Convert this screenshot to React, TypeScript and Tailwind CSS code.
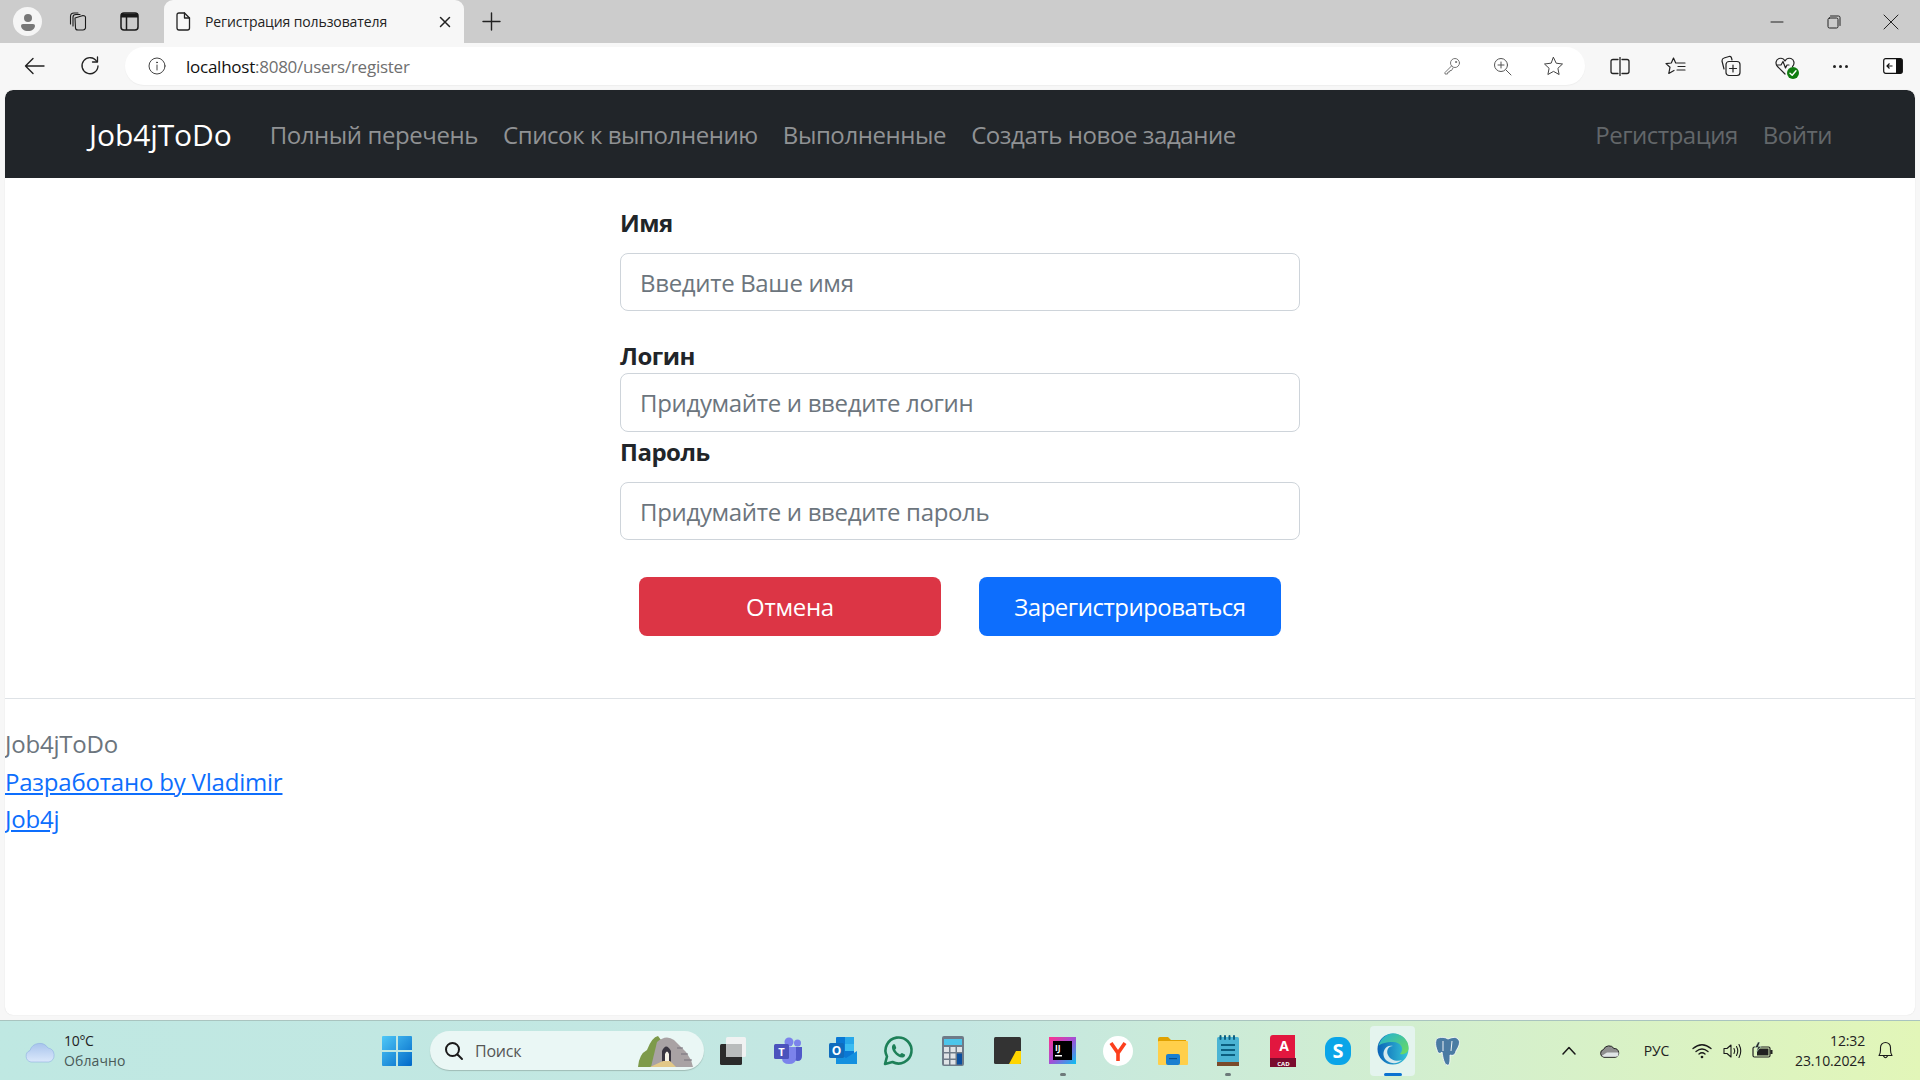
import React from "react";

const F = { fontFamily: '"Open Sans", "Noto Sans", sans-serif' };

function Ic({ w = 20, h = 20, vb = "0 0 20 20", sw = 1.2, color = "#1a1a1a", children, className = "" }: any) {
  return (
    <svg width={w} height={h} viewBox={vb} fill="none" stroke={color} strokeWidth={sw} strokeLinecap="round" strokeLinejoin="round" className={className}>
      {children}
    </svg>
  );
}

function TabStrip() {
  return (
    <div className="h-[43px] bg-[#cccccc] flex items-end shrink-0">
      <div className="w-[164px] h-full flex items-center pl-[13px] shrink-0">
        <div className="w-[29px] h-[29px] rounded-full bg-[#f5f5f5] flex items-center justify-center shrink-0">
          <svg width="18" height="20" viewBox="0 0 18 20"><circle cx="9" cy="6" r="4" fill="#777" /><path d="M2 13.5 Q2 12 4 12 H14 Q16 12 16 13.5 C16 17 13 19 9 19 C5 19 2 17 2 13.5Z" fill="#777" /></svg>
        </div>
        <div className="ml-[25px] shrink-0 flex">
          <Ic w={22} h={22} vb="0 0 22 22" sw={1.1}>
            <path d="M8 7 L16 4.5 Q18 4.5 18.5 6 V17 Q18 19 16 19 L11 19 Q8.5 19 8.5 17Z" />
            <path d="M6 15 V6 Q6 3.5 9 3.5 H13" />
            <path d="M3.5 13 V5.5 Q3.5 2 7 2 H11" />
          </Ic>
        </div>
        <div className="ml-[31px] shrink-0 flex">
          <svg width="19" height="19" viewBox="0 0 19 19" fill="none" stroke="#1a1a1a" strokeWidth="1.5"><rect x="1" y="1" width="17" height="17" rx="3" /><path d="M1 3.5H18" strokeWidth="4" /><path d="M6.5 5V18" /></svg>
        </div>
      </div>
      <div className="w-[300px] h-full bg-[#f7f7f7] rounded-t-[9px] flex items-center pl-[11px] shrink-0">
        <Ic w={16} h={19} vb="0 0 16 19" sw={1.3} color="#222"><path d="M2 3 Q2 1 4 1 H9.5 L14.500 6 V16 Q14.500 18 12.500 18 H4 Q2 18 2 16Z" /><path d="M9.500 1V6H14.500" /></Ic>
        <span className="ml-[14px] -mt-[1px] text-[14px] text-[#222] whitespace-nowrap tracking-[-0.1px]" style={F}>Регистрация пользователя</span>
        <div className="ml-auto mr-[13px] flex">
          <Ic w={12} h={12} vb="0 0 12 12" sw={1.5} color="#222"><path d="M1.500 1.500 10.500 10.500M10.500 1.500 1.500 10.500" /></Ic>
        </div>
      </div>
      <div className="ml-[18px] h-full flex items-center">
        <Ic w={19} h={19} vb="0 0 19 19" sw={1.4} color="#222"><path d="M9.500 1V18M1 9.500H18" /></Ic>
      </div>
      <div className="ml-auto h-full flex items-center">
        <Ic w={14} h={14} vb="0 0 14 14" sw={1} color="#222"><path d="M1 7H13" /></Ic>
        <div className="ml-[43px] flex">
          <Ic w={14} h={14} vb="0 0 14 14" sw={1} color="#222"><rect x="1" y="3" width="10" height="10" rx="1.500" /><path d="M3.500 1H11.500Q13 1 13 2.500V10.500" /></Ic>
        </div>
        <div className="ml-[42px] mr-[21px] flex">
          <Ic w={16} h={16} vb="0 0 16 16" sw={1} color="#222"><path d="M1 1 15 15M15 1 1 15" /></Ic>
        </div>
      </div>
    </div>
  );
}

function Toolbar() {
  return (
    <div className="h-[47px] bg-[#f7f7f7] flex items-center shrink-0 pb-[1px]">
      <div className="ml-[24px] flex shrink-0">
        <Ic w={21} h={18} vb="0 0 21 18" sw={1.4} color="#222"><path d="M20 9H1.500M9 1.500 1.500 9 9 16.500" /></Ic>
      </div>
      <div className="ml-[35px] flex shrink-0">
        <Ic w={20} h={20} vb="0 0 20 20" sw={1.3} color="#222"><path d="M16.800 5.500A8 8 0 1 0 18 10" /><path d="M17.500 1V6H12.500" /></Ic>
      </div>
      <div className="ml-[25px] w-[1460px] h-[38px] bg-white rounded-full flex items-center shrink-0 shadow-[0_1px_1px_#eee]">
        <div className="ml-[23px] flex">
          <Ic w={18} h={18} vb="0 0 18 18" sw={1} color="#444"><circle cx="9" cy="9" r="8" /><path d="M9 8V13" /><circle cx="9" cy="5.400" r=".5" fill="#444" /></Ic>
        </div>
        <span className="ml-[20px] mt-[1px] text-[17px] whitespace-nowrap tracking-[-0.25px]" style={F}>
          <span className="text-[#111]">localhost</span><span className="text-[#6f6f6f]">:8080/users/register</span>
        </span>
        <div className="ml-auto flex items-center">
          <Ic w={18} h={18} vb="0 0 18 18" sw={1} color="#777"><circle cx="12" cy="6" r="4.500" /><path d="M8.500 9 2 15.500V17H4.500L5 15H6.500L7 13.500H8.500L10 11" /><circle cx="13" cy="5" r=".6" fill="#777" /></Ic>
          <div className="ml-[32px] flex">
            <Ic w={19} h={19} vb="0 0 19 19" sw={1} color="#555"><circle cx="8" cy="8" r="6.500" /><path d="M13 13 18 18M8 5V11M5 8H11" /></Ic>
          </div>
          <div className="ml-[31px] mr-[21px] flex">
            <Ic w={21} h={20} vb="0 0 21 20" sw={1} color="#444"><path d="M10.500 1.500 13.200 7.200 19.500 8 14.900 12.300 16.100 18.500 10.500 15.400 4.900 18.500 6.100 12.300 1.500 8 7.800 7.200Z" /></Ic>
          </div>
        </div>
      </div>
      <div className="ml-[25px] flex shrink-0">
        <Ic w={20} h={19} vb="0 0 20 19" sw={1.3} color="#222"><path d="M8 2.500H3Q1 2.500 1 4.500V14.500Q1 16.500 3 16.500H8M12 2.500H17Q19 2.500 19 4.500V14.500Q19 16.500 17 16.500H12M10 0.500V18.500" /></Ic>
      </div>
      <div className="ml-[35px] flex shrink-0">
        <Ic w={21} h={20} vb="0 0 21 20" sw={1.2} color="#222"><path d="M8.500 2 10.700 7H20M13 10.500H20M12 14H20M8.500 2 6.300 7 1 7.600 5 11.200 3.800 17.500 9 14.500" /></Ic>
      </div>
      <div className="ml-[34px] flex shrink-0">
        <Ic w={21} h={22} vb="0 0 21 22" sw={1.2} color="#222"><path d="M4 14 2 6Q2 3.500 4 3L9 1.500Q11 1 11.500 3L12 5" /><rect x="6" y="6.500" width="14" height="14" rx="3" /><path d="M13 10V17M9.500 13.500H16.500" /></Ic>
      </div>
      <div className="ml-[34px] flex shrink-0 relative">
        <Ic w={21} h={20} vb="0 0 21 20" sw={1.2} color="#222"><path d="M10 18 2.500 10.500C0 8 0.800 3.500 4 2.500 6.500 1.800 8.800 2.800 10 5 11.200 2.800 13.500 1.800 16 2.500 19.200 3.500 20 8 17.500 10.500" /><path d="M2 9H6L8 5.500 10.500 12 12 9H14" /></Ic>
        <div className="absolute -right-[3px] -bottom-[3px] w-[12px] h-[12px] rounded-full bg-[#107c10] flex items-center justify-center">
          <Ic w={8} h={8} vb="0 0 8 8" sw={1.4} color="#fff"><path d="M1 4.200 3.200 6.200 7 1.800" /></Ic>
        </div>
      </div>
      <div className="ml-[37px] flex gap-[3px] shrink-0">
        <div className="w-[3px] h-[3px] rounded-full bg-[#222]" />
        <div className="w-[3px] h-[3px] rounded-full bg-[#222]" />
        <div className="w-[3px] h-[3px] rounded-full bg-[#222]" />
      </div>
      <div className="ml-[35px] flex shrink-0">
        <svg width="20" height="16" viewBox="0 0 20 16"><rect x=".7" y=".7" width="18.600" height="14.600" rx="2" fill="#fff" stroke="#111" strokeWidth="1.200" /><path d="M13 1H18Q19.300 1 19.300 2.500V13.500Q19.300 15 18 15H13Z" fill="#111" /><path d="M9.500 8H4M6.500 5.500 4 8 6.500 10.500" stroke="#111" strokeWidth="1.200" fill="none" /></svg>
      </div>
    </div>
  );
}

function NavBar() {
  const links = ["Полный перечень", "Список к выполнению", "Выполненные", "Создать новое задание"];
  return (
    <nav className="h-[88px] bg-[#212529] rounded-t-[8px] flex items-center pl-[84px] pr-[83px] pt-[1px] shrink-0" style={F}>
      <span className="text-[30px] text-white tracking-[-0.1px] mr-[38px] whitespace-nowrap">Job4jToDo</span>
      <div className="flex gap-[25px]">
        {links.map((l) => (
          <span key={l} className="text-[24px] text-[#909294] tracking-[-0.42px] whitespace-nowrap">{l}</span>
        ))}
      </div>
      <div className="ml-auto flex gap-[25px]">
        <span className="text-[24px] text-[#63676a] tracking-[-0.5px]">Регистрация</span>
        <span className="text-[24px] text-[#63676a] tracking-[-0.5px]">Войти</span>
      </div>
    </nav>
  );
}

function Field({ label, ph, labelClass, inputClass }: { label: string; ph: string; labelClass: string; inputClass: string }) {
  return (
    <div>
      <label className={"block text-[24px] leading-[36px] font-bold text-[#212529] tracking-[-0.5px] " + labelClass}>{label}</label>
      <input
        readOnly
        placeholder={ph}
        style={F}
        className={"block w-full bg-white border border-[#ced4da] rounded-[8px] pl-[19px] pr-[20px] text-[24px] tracking-[-0.33px] placeholder:text-[#6c757d] outline-none " + inputClass}
      />
    </div>
  );
}

function Form() {
  return (
    <div className="w-[680px] mx-auto pt-[27px]" style={F}>
      <Field label="Имя" ph="Введите Ваше имя" labelClass="mb-[12px]" inputClass="h-[58px] mb-[26px]" />
      <Field label="Логин" ph="Придумайте и введите логин" labelClass="pt-[1px] -mb-[1px]" inputClass="h-[59px]" />
      <Field label="Пароль" ph="Придумайте и введите пароль" labelClass="pt-[2px] mb-[12px]" inputClass="h-[58px]" />
      <div className="flex justify-center gap-[38px] mt-[37px]">
        <button className="w-[302px] h-[59px] pt-[1px] bg-[#dc3545] rounded-[8px] text-white text-[24px] tracking-[-0.3px]">Отмена</button>
        <button className="w-[302px] h-[59px] pt-[1px] bg-[#0d6efd] rounded-[8px] text-white text-[24px] tracking-[-0.5px]">Зарегистрироваться</button>
      </div>
    </div>
  );
}

function Footer() {
  return (
    <footer className="mt-[62px] border-t border-[#dee2e6] pt-[26px] text-[24px] leading-[37.500px] tracking-[-0.2px]" style={F}>
      <div className="text-[#6c757d]">Job4jToDo</div>
      <div><a className="text-[#0d6efd] underline">Разработано by Vladimir</a></div>
      <div><a className="text-[#0d6efd] underline">Job4j</a></div>
    </footer>
  );
}

function TaskIcon({ children, dot, active }: any) {
  return (
    <div className={"w-[45px] h-[50px] mx-[5px] rounded-[4px] relative flex items-center justify-center shrink-0 " + (active ? "bg-[#e4f4ee]" : "")}>
      {children}
      {dot && <div className="absolute bottom-[0px] left-1/2 -translate-x-1/2 w-[6px] h-[3px] rounded-full bg-[#6d7a7a]" />}
      {active && <div className="absolute bottom-[0px] left-1/2 -translate-x-1/2 w-[18px] h-[3px] rounded-full bg-[#0a72d1]" />}
    </div>
  );
}

function TaskBar() {
  return (
    <div className="h-[60px] shrink-0 border-t border-[#a9c4bf] bg-gradient-to-r from-[#bfe8e2] via-[#c4e7e2] to-[#e2f6b8] flex items-center relative" style={F}>
      <div className="ml-[24px] flex shrink-0">
        <svg width="32" height="24" viewBox="0 0 32 24"><defs><linearGradient id="c" x1="0" y1="0" x2="0" y2="1"><stop offset="0" stopColor="#a8c4ec" /><stop offset="1" stopColor="#dbe8fb" /></linearGradient></defs><path d="M7 23A6 6 0 0 1 6 11.500 10 10 0 0 1 24 9 7.200 7.200 0 0 1 25 23Z" fill="url(#c)" stroke="#8fb0e2" strokeWidth=".6" /></svg>
      </div>
      <div className="ml-[8px] w-[100px] shrink-0 text-[14px] leading-[20px] text-[#222] tracking-[-0.3px]">
        <div>10°C</div>
        <div className="text-[#4a5a58] tracking-[0.1px]">Облачно</div>
      </div>
      <div className="ml-[218px] flex shrink-0">
        <svg width="30" height="30" viewBox="0 0 30 30"><defs><linearGradient id="w" x1="0" y1="0" x2="1" y2="1"><stop offset="0" stopColor="#4fc8f7" /><stop offset="1" stopColor="#0068c8" /></linearGradient></defs><path d="M0 1Q0 0 1 0H14V14H0ZM16 0H29Q30 0 30 1V14H16ZM0 16H14V30H1Q0 30 0 29ZM16 16H30V29Q30 30 29 30H16Z" fill="url(#w)" /></svg>
      </div>
      <div className="ml-[18px] w-[274px] h-[39px] rounded-full bg-[#eaf7f5] shadow-[0_1px_1px_#9fbcb6] flex items-center shrink-0 relative">
        <div className="ml-[14px] flex">
          <Ic w={20} h={20} vb="0 0 20 20" sw={2} color="#1a1a1a"><circle cx="8.500" cy="8.500" r="6.500" /><path d="M13.500 13.500 18 18" /></Ic>
        </div>
        <span className="ml-[11px] text-[16px] text-[#555] tracking-[-0.2px]">Поиск</span>
        <div className="absolute right-[8px] bottom-[2px] flex">
          <svg width="60" height="34" viewBox="0 0 60 34">
            <path d="M2 33Q3 20 11 16 16 3 22 2L25 6 18 33Z" fill="#7d9a4a" />
            <path d="M15 33 21 8Q30 0 38 6L44 12 50 18 55 26 57 33Z" fill="#a9a2a4" />
            <path d="M26 33V17Q30 8 35 17V33Z" fill="#3a3540" />
            <path d="M29 33V20Q31 15 33 20V33Z" fill="#f7f3e8" />
            <path d="M14 33 27 27H34L40 33Z" fill="#e2c888" />
            <path d="M41 14H47M45 20H52M48 26H56" stroke="#77707a" strokeWidth="1.200" />
          </svg>
        </div>
      </div>
      <div className="ml-[1px] flex items-center shrink-0">
        <TaskIcon><svg width="28" height="30" viewBox="0 0 28 30"><rect x="1" y="8" width="22" height="21" rx="1.500" fill="#2b2b2b" /><rect x="7" y="1" width="20" height="20" rx="1.500" fill="#f0f2f2" /><rect x="7" y="8" width="16" height="13" fill="#b9bcbc" /></svg></TaskIcon>
        <TaskIcon><svg width="30" height="28" viewBox="0 0 30 28"><circle cx="24.500" cy="6" r="3.500" fill="#7b83eb" /><circle cx="16" cy="5" r="4.500" fill="#7b83eb" /><path d="M20 10H29V19Q29 24 24.500 24 22 24 20 22Z" fill="#5059c9" /><path d="M9 10H23V21Q23 27 16 27 9 27 9 21Z" fill="#7b83eb" /><rect x="1" y="7" width="15" height="15" rx="1.500" fill="#4b53bc" /><text x="8.500" y="18.500" fontSize="11" fontWeight="700" fill="#fff" textAnchor="middle" fontFamily="Open Sans">T</text></svg></TaskIcon>
        <TaskIcon><svg width="30" height="30" viewBox="0 0 30 30"><rect x="8" y="1" width="18" height="22" rx="1" fill="#0a78d4" /><rect x="17" y="1" width="9" height="7" fill="#28a8ea" /><rect x="17" y="8" width="9" height="7" fill="#50d9ff" opacity=".7" /><path d="M8 16 18 22 29 15V28H8Z" fill="#1490df" /><rect x="1" y="7" width="15" height="15" rx="1.500" fill="#0f6cbd" /><text x="8.500" y="18.800" fontSize="12" fontWeight="700" fill="#fff" textAnchor="middle" fontFamily="Open Sans">O</text></svg></TaskIcon>
        <TaskIcon><svg width="32" height="32" viewBox="0 0 32 32"><path d="M3 29 5 21.500A13 13 0 1 1 10.500 27Z" fill="none" stroke="#1d8058" strokeWidth="2.600" strokeLinejoin="round" /><path d="M11 9.500C9.500 11 9.500 14 12 17.500 15 21.500 18.500 23 21 22.500 22.500 22 23.500 20.500 23 19.500L20 18C19 18 18.800 19.200 18 19.400 16 18.800 14 16.500 13.200 14.800 13.400 14 14.500 13.600 14.200 12.600L13 9.500C12.500 9 11.500 9 11 9.500Z" fill="#1d8058" /></svg></TaskIcon>
        <TaskIcon><svg width="24" height="30" viewBox="0 0 24 30"><rect x="1" y="0" width="22" height="30" rx="2" fill="#6e7b88" /><rect x="3" y="3" width="18" height="6" fill="#4cc5ea" /><g fill="#dfe3e6"><rect x="3" y="11" width="5" height="5" /><rect x="9.500" y="11" width="5" height="5" /><rect x="16" y="11" width="5" height="5" /><rect x="3" y="17.500" width="5" height="5" /><rect x="9.500" y="17.500" width="5" height="5" /><rect x="3" y="24" width="5" height="4.500" /><rect x="9.500" y="24" width="5" height="4.500" /></g><rect x="16" y="17.500" width="5" height="11" fill="#0b4f9e" /></svg></TaskIcon>
        <TaskIcon><svg width="27" height="27" viewBox="0 0 27 27"><rect width="27" height="27" rx="1.500" fill="#333" /><path d="M15 27 22 14H27V25.500Q27 27 25.500 27Z" fill="#ffd500" /></svg></TaskIcon>
        <TaskIcon dot><svg width="27" height="27" viewBox="0 0 27 27"><defs><linearGradient id="ij" x1="0" y1="0" x2="1" y2="1"><stop offset="0" stopColor="#ff318c" /><stop offset=".5" stopColor="#a34fd6" /><stop offset="1" stopColor="#07c3f2" /></linearGradient></defs><rect width="27" height="27" fill="url(#ij)" /><rect x="4" y="4" width="19" height="19" fill="#000" /><text x="6" y="14" fontSize="8.500" fontWeight="700" fill="#fff" fontFamily="Open Sans">IJ</text><rect x="6" y="18" width="7" height="1.500" fill="#fff" /></svg></TaskIcon>
        <TaskIcon><svg width="30" height="30" viewBox="0 0 30 30"><circle cx="15" cy="15" r="15" fill="#fff" /><path d="M8 7 15 17 22 7M15 17V25" stroke="#fc3f1d" strokeWidth="3.600" fill="none" /></svg></TaskIcon>
        <TaskIcon><svg width="30" height="28" viewBox="0 0 30 28"><path d="M0 2Q0 0 2 0H10L13 3H28V8H0Z" fill="#e0a100" /><rect y="4" width="30" height="24" rx="1" fill="#ffcf4a" /><rect x="8" y="17" width="14" height="11" rx="2" fill="#1a7fd0" /><rect x="11" y="21" width="8" height="1.200" fill="#0b4f8a" /></svg></TaskIcon>
        <TaskIcon dot><svg width="22" height="32" viewBox="0 0 22 32"><rect x="0" y="2" width="22" height="27" rx="1.500" fill="#4bb4d4" /><rect x="0" y="27" width="22" height="4" fill="#7a4a2a" /><g fill="#0c5f80"><rect x="2.500" y="0" width="2" height="5" rx="1" /><rect x="7" y="0" width="2" height="5" rx="1" /><rect x="11.500" y="0" width="2" height="5" rx="1" /><rect x="16" y="0" width="2" height="5" rx="1" /><rect x="4" y="9" width="14" height="2" /><rect x="4" y="14" width="14" height="2" /><rect x="4" y="19" width="14" height="2" /></g></svg></TaskIcon>
        <TaskIcon><svg width="26" height="32" viewBox="0 0 26 32"><path d="M3 0H25V32H3Q0 32 0 29V3Q0 0 3 0Z" fill="#e2173f" /><rect y="23" width="26" height="9" fill="#7a0c2e" /><text x="14" y="16" fontSize="14" fontWeight="700" fill="#fff" textAnchor="middle" fontFamily="Open Sans">A</text><text x="13.500" y="30.500" fontSize="6" fontWeight="700" fill="#fff" textAnchor="middle" fontFamily="Open Sans">CAD</text></svg></TaskIcon>
        <TaskIcon><svg width="28" height="30" viewBox="0 0 28 30"><rect x="1" y="1" width="26" height="28" rx="11" fill="#0aa5e8" /><text x="14" y="22" fontSize="20" fontWeight="700" fill="#fff" textAnchor="middle" fontFamily="Open Sans">S</text></svg></TaskIcon>
        <TaskIcon active><svg width="32" height="32" viewBox="0 0 32 32" className="-mt-[3px]"><defs><linearGradient id="e" x1="0" y1="0" x2="1" y2="0"><stop offset="0" stopColor="#0b63b8" /><stop offset="1" stopColor="#36c7d8" /></linearGradient><linearGradient id="e2" x1="0" y1="0" x2="1" y2="1"><stop offset="0" stopColor="#1fb0d8" /><stop offset="1" stopColor="#6fdc5a" /></linearGradient></defs><circle cx="16" cy="16" r="15.500" fill="url(#e)" /><path d="M1.500 13C4 4 11 .5 16 .5 25 .5 31.500 7 31.500 15 31.500 20 27 22 23 21 28 16 24 9 16 9 9 9 3 11 1.500 13Z" fill="url(#e2)" /><path d="M16 13C11 13 9 18 11 22 13 27 20 29 25 27 20 32 10 31 7 24 5 18 9 11 16 13Z" fill="#d5e9ee" /></svg></TaskIcon>
        <TaskIcon><svg width="28" height="30" viewBox="0 0 28 30"><path d="M4 2C1 3 1 9 3 14 4 18 6 18 8 16 9 22 10 28 13 29 16 30 16 26 16 19 19 20 21 19 22 15 25 10 27 6 24 3 21 0 17 2 14 3 11 1 7 1 4 2Z" fill="#4a7ba3" stroke="#fff" strokeWidth=".8" /><path d="M9 5V15M18 5 17 15" stroke="#fff" strokeWidth=".9" fill="none" /></svg></TaskIcon>
      </div>
      <div className="ml-auto flex items-center shrink-0">
        <Ic w={14} h={9} vb="0 0 14 9" sw={1.500} color="#1a1a1a"><path d="M1 8 7 1.500 13 8" /></Ic>
        <div className="ml-[23px] flex">
          <svg width="21" height="14" viewBox="0 0 21 14"><path d="M5 13.300A4 4 0 0 1 4.500 5.500 6 6 0 0 1 15 4.500 4.500 4.500 0 0 1 16.500 13.300Z" fill="#8f8f8f" stroke="#222" strokeWidth="1" /><path d="M2.500 12 8 8.500H19.500V12L17 12.800H5Z" fill="#e9eef0" opacity=".9" /></svg>
        </div>
        <span className="ml-[24px] text-[14px] text-[#222] tracking-[-0.2px]">РУС</span>
        <div className="ml-[23px] flex">
          <Ic w={20} h={16} vb="0 0 20 16" sw={1.300} color="#1a1a1a"><path d="M1 5.500Q10 -2 19 5.500M4 8.500Q10 3.500 16 8.500M7 11Q10 8.500 13 11" /><circle cx="10" cy="14" r=".7" fill="#1a1a1a" /></Ic>
        </div>
        <div className="ml-[11px] flex">
          <Ic w={21} h={16} vb="0 0 21 16" sw={1.100} color="#1a1a1a"><path d="M1 5.500H4L8 2V14L4 10.500H1Z" /><path d="M11 5.500Q12.500 8 11 10.500M13.500 3.500Q16 8 13.500 12.500M16 1.500Q19.500 8 16 14.500" /></Ic>
        </div>
        <div className="ml-[8px] flex">
          <svg width="21" height="17" viewBox="0 0 21 17"><rect x="1" y="5" width="17" height="10" rx="1.500" fill="none" stroke="#222" strokeWidth="1.200" /><rect x="5" y="6.500" width="11.500" height="7" fill="#222" /><rect x="18.300" y="8" width="2.200" height="4" fill="#222" /><path d="M6 0 3 5.500H6L4.500 10 9 4.500H6.300L8 0Z" fill="#222" stroke="#c8eed2" strokeWidth=".6" /></svg>
        </div>
        <div className="ml-[22px] text-right text-[14px] leading-[20px] text-[#222] tracking-[-0.15px]">
          <div>12:32</div>
          <div>23.10.2024</div>
        </div>
        <div className="ml-[12px] mr-[26px] flex">
          <Ic w={17} h={19} vb="0 0 17 19" sw={1.100} color="#1a1a1a"><path d="M2 14.500Q3.500 12.500 3.500 9V6.500A5 5 0 0 1 13.500 6.500V9Q13.500 12.500 15 14.500Z" /><path d="M6.500 15Q8.500 18.500 10.500 15" /></Ic>
        </div>
      </div>
    </div>
  );
}

export default function App() {
  return (
    <div className="w-[1920px] h-[1080px] overflow-hidden flex flex-col bg-[#f7f7f7]">
      <TabStrip />
      <Toolbar />
      <main className="flex-1 mx-[5px] mb-[5px] bg-white rounded-[8px] flex flex-col min-h-0 overflow-hidden shadow-[0_0_1px_#d0d0d0]">
        <NavBar />
        <Form />
        <Footer />
      </main>
      <TaskBar />
    </div>
  );
}
